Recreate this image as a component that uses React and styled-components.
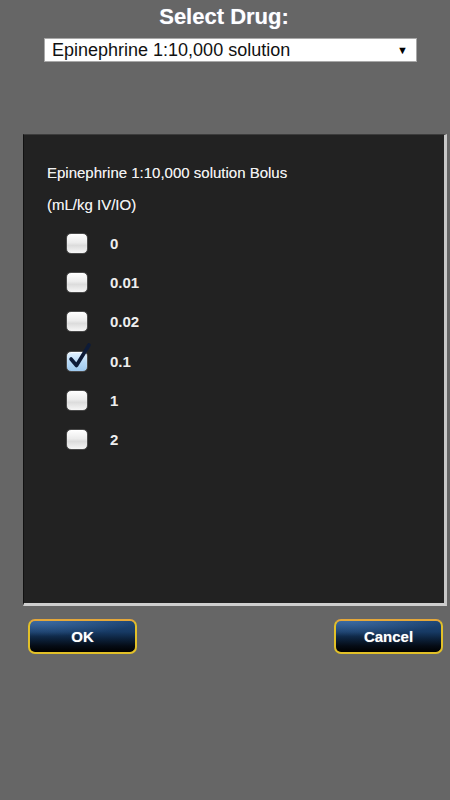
import React from 'react'
import styled, { createGlobalStyle } from 'styled-components'

const GlobalStyle = createGlobalStyle`
  html, body {
    margin: 0;
    padding: 0;
    background: #666666;
  }
  body {
    font-family: "Liberation Sans", Arial, sans-serif;
  }
  #root {
    min-height: 800px;
  }
`

const Page = styled.div`
  width: 450px;
  min-height: 800px;
  background: #666666;
`

const Title = styled.div`
  padding-top: 2px;
  height: 30px;
  line-height: 30px;
  text-align: center;
  padding-right: 2px;
  font-size: 22px;
  font-weight: bold;
  color: #ffffff;
  text-shadow: 0 0 1px rgba(180, 200, 255, 0.6);
`

const DrugSelect = styled.div`
  margin: 6px 0 0 44px;
  width: 373px;
  height: 24px;
  box-sizing: border-box;
  border: 1px solid #a8a8a8;
  background: #ffffff;
  display: flex;
  align-items: center;
  justify-content: space-between;
  padding: 0 8px 0 7px;
  font-size: 18px;
  line-height: 22px;
  color: #111111;
`

const Arrow = styled.span`
  font-size: 11px;
  color: #000;
`

const Panel = styled.div`
  margin: 72px 3px 0 23px;
  height: 472px;
  box-sizing: border-box;
  background: #222222;
  border-style: solid;
  border-width: 1px 3px 3px 1px;
  border-color: #3c3c3c #c8c8c8 #cfcfcf #111111;
  padding: 22px 0 0 23px;
  color: #f2f2f2;
`

const Heading = styled.div`
  font-size: 15px;
  line-height: 32px;
  color: #f0f0f0;
  text-shadow: 0 0 0.5px rgba(255, 255, 255, 0.6);
`

const OptionList = styled.div`
  margin-top: 3px;
  padding-left: 19px;
`

const OptionRow = styled.div`
  height: 39.2px;
  display: flex;
  align-items: center;
  gap: 22px;
`

const Box = styled.span`
  position: relative;
  width: 22px;
  height: 21px;
  box-sizing: border-box;
  border-radius: 5px;
  border: 1px solid #4a4a4a;
  background: ${p => p.checked
    ? 'linear-gradient(to bottom, #e4f2ff 0%, #b6d9f7 55%, #9fcaf0 100%)'
    : 'linear-gradient(to bottom, #ffffff 0%, #ececec 45%, #dcdcdc 60%, #f6f6f6 100%)'};
  box-shadow: inset 0 1px 1px rgba(255, 255, 255, 0.8);
  flex-shrink: 0;
`

const Check = styled.svg`
  position: absolute;
  left: 2px;
  top: -7px;
  width: 22px;
  height: 23px;
  overflow: visible;
`

const OptionLabel = styled.span`
  font-size: 15px;
  font-weight: bold;
  color: #eeeeee;
`

const ButtonRow = styled.div`
  margin-top: 13px;
  padding: 0 7px 0 28px;
  display: flex;
  justify-content: space-between;
`

const Button = styled.div`
  width: 109px;
  height: 35px;
  box-sizing: border-box;
  border: 2px solid #e2c028;
  border-top-color: #e5a83a;
  border-radius: 7px;
  background:
    radial-gradient(ellipse 130% 70% at 10% 0%, rgba(80, 130, 190, 0.6) 0%, rgba(80, 130, 190, 0) 70%),
    linear-gradient(to bottom, #1f4777 0%, #173a64 35%, #0d2440 55%, #050c16 80%, #000000 100%);
  display: flex;
  align-items: center;
  justify-content: center;
  font-size: 15px;
  font-weight: bold;
  color: #ffffff;
  text-shadow: 0 0 1px rgba(255, 255, 255, 0.5);
`

const options = [
  { value: '0' },
  { value: '0.01' },
  { value: '0.02' },
  { value: '0.1', checked: true },
  { value: '1' },
  { value: '2' }
]

const Checkbox = ({ checked }) => (
  <Box checked={checked}>
    {checked && (
      <Check viewBox='0 0 22 23'>
        <path d='M2 14 L7.5 20.5 L20 0' fill='none' stroke='#0d1b38' strokeWidth='3.6' strokeLinecap='round' strokeLinejoin='round' />
      </Check>
    )}
  </Box>
)

const App = () => (
  <Page>
    <GlobalStyle />
    <Title>Select Drug:</Title>
    <DrugSelect>
      <span>Epinephrine 1:10,000 solution</span>
      <Arrow>▼</Arrow>
    </DrugSelect>
    <Panel>
      <Heading>Epinephrine 1:10,000 solution Bolus</Heading>
      <Heading>(mL/kg IV/IO)</Heading>
      <OptionList>
        {options.map(o => (
          <OptionRow key={o.value}>
            <Checkbox checked={o.checked} />
            <OptionLabel>{o.value}</OptionLabel>
          </OptionRow>
        ))}
      </OptionList>
    </Panel>
    <ButtonRow>
      <Button>OK</Button>
      <Button>Cancel</Button>
    </ButtonRow>
  </Page>
)

export default App
